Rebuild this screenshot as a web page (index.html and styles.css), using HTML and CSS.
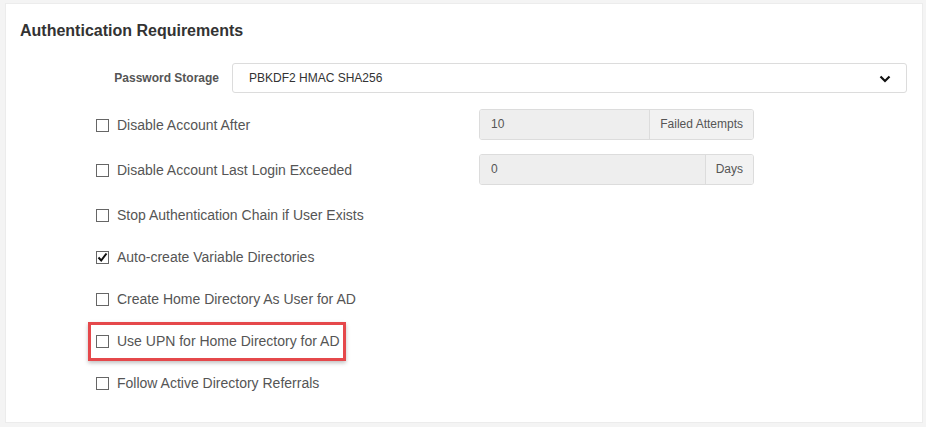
FILE: index.html
```html
<!DOCTYPE html>
<html lang="en">

<head>
    <meta charset="UTF-8">
    <meta name="viewport" content="width=device-width, initial-scale=1.0">
    <title>Authentication Requirements</title>
    <link rel="stylesheet" href="styles.css">
</head>

<body>

    <div class="panel">
        <h2 class="panel-title">Authentication Requirements</h2>

        <div class="select-row">
            <label class="select-label" for="storage">Password Storage</label>
            <div class="select">
                <span id="storage">PBKDF2 HMAC SHA256</span>
                <svg class="chevron" width="12" height="8" viewBox="0 0 12 8">
                    <path d="M1.5 1.5 L6 6 L10.5 1.5" fill="none" stroke="#111" stroke-width="2.2"/>
                </svg>
            </div>
        </div>

        <div class="options">
            <div class="option option-field">
                <label class="check"><span class="box"></span>Disable Account After</label>
                <div class="input-group">
                    <input type="text" value="10" readonly>
                    <span class="addon">Failed Attempts</span>
                </div>
            </div>

            <div class="option option-field">
                <label class="check"><span class="box"></span>Disable Account Last Login Exceeded</label>
                <div class="input-group">
                    <input type="text" value="0" readonly>
                    <span class="addon">Days</span>
                </div>
            </div>

            <div class="option">
                <label class="check"><span class="box"></span>Stop Authentication Chain if User Exists</label>
            </div>

            <div class="option">
                <label class="check">
                    <span class="box">
                        <svg width="11" height="11" viewBox="0 0 11 11">
                            <path d="M1.5 5.5 L4.2 8.5 L9.5 1.5" fill="none" stroke="#111" stroke-width="2"/>
                        </svg>
                    </span>Auto-create Variable Directories
                </label>
            </div>

            <div class="option">
                <label class="check"><span class="box"></span>Create Home Directory As User for AD</label>
            </div>

            <div class="option">
                <label class="check highlight"><span class="box"></span>Use UPN for Home Directory for AD</label>
            </div>

            <div class="option">
                <label class="check"><span class="box"></span>Follow Active Directory Referrals</label>
            </div>
        </div>
    </div>

</body>

</html>
```

FILE: styles.css
```css
body {
    margin: 0;
    padding: 3px 3px 4px 5px;
    background: #f4f4f4;
    font-family: "Liberation Sans", Arial, sans-serif;
}

.panel {
    height: 418px;
    background: #fff;
    border: 1px solid #ececec;
    padding: 0;
}

.panel-title {
    margin: 0;
    padding: 17px 0 0 14px;
    font-size: 16px;
    line-height: 20px;
    font-weight: bold;
    color: #333;
}

.select-row {
    display: flex;
    align-items: center;
    margin-top: 22px;
    margin-right: 15px;
}

.select-label {
    width: 213px;
    text-align: right;
    margin-right: 13px;
    font-size: 12px;
    font-weight: bold;
    color: #555;
}

.select {
    flex: 1;
    height: 28px;
    border: 1px solid #dcdcdc;
    border-radius: 3px;
    display: flex;
    align-items: center;
    justify-content: space-between;
    padding: 0 15px 0 16px;
    font-size: 12px;
    color: #333;
}

.chevron {
    margin-top: 1px;
}

.options {
    margin-top: 17px;
    padding-left: 90px;
}

.option {
    display: grid;
    grid-template-columns: 383px 275px;
    align-items: center;
    height: 30px;
    margin-bottom: 12px;
}

.option-field {
    margin-bottom: 15px;
}

.check {
    display: inline-flex;
    align-items: center;
    font-size: 14px;
    color: #555;
    position: relative;
    justify-self: start;
    height: 30px;
}

.box {
    width: 11px;
    height: 11px;
    border: 1px solid #666;
    margin-right: 8px;
    display: inline-flex;
    align-items: center;
    justify-content: center;
    background: #fff;
}

.highlight::after {
    content: "";
    position: absolute;
    top: -4px;
    bottom: -5px;
    left: -8px;
    right: -6px;
    border: 3px solid #e5484b;
    box-shadow: 0 2px 4px rgba(0, 0, 0, 0.25);
}

.input-group {
    display: flex;
    height: 29px;
    border: 1px solid #dcdcdc;
    border-radius: 3px;
    overflow: hidden;
    margin-top: -2px;
}

.input-group input {
    flex: 1;
    min-width: 0;
    border: none;
    background: #eee;
    padding: 0 11px;
    font-family: inherit;
    font-size: 12px;
    color: #555;
    outline: none;
}

.addon {
    display: flex;
    align-items: center;
    padding: 0 10px;
    background: #f2f2f2;
    border-left: 1px solid #dcdcdc;
    font-size: 12px;
    color: #555;
}
```
